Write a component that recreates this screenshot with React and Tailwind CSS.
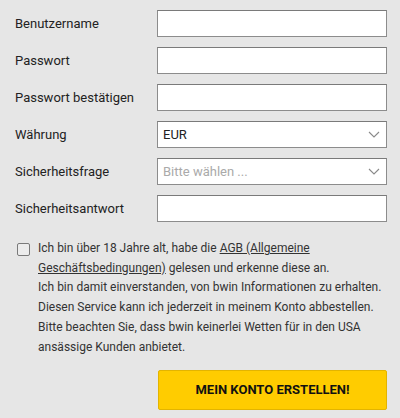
import React from "react";

function Chevron() {
  return (
    <svg width="12" height="7" viewBox="0 0 12 7" className="shrink-0">
      <path d="M1 1l5 5 5-5" fill="none" stroke="#8a8a8a" strokeWidth="1.1" />
    </svg>
  );
}

function Row({ label, children }) {
  return (
    <div className="flex items-center h-[27px]">
      <div className="w-[157px] pl-[15px] text-[13px] text-[#222]">{label}</div>
      <div className="w-[230px] h-[27px]">{children}</div>
    </div>
  );
}

const boxCls =
  "w-full h-full bg-white border border-[#8c8c8c] border-t-[#7a7a7a] flex items-center px-[5px] text-[13px]";

export default function App() {
  return (
    <div
      className="w-[400px] h-[418px] bg-[#e6e6e6] pt-[10px]"
      style={{ fontFamily: "Roboto, 'Liberation Sans', sans-serif" }}
    >
      <div className="flex flex-col gap-[10px]">
        <Row label="Benutzername">
          <div className={boxCls}></div>
        </Row>
        <Row label="Passwort">
          <div className={boxCls}></div>
        </Row>
        <Row label="Passwort bestätigen">
          <div className={boxCls}></div>
        </Row>
        <Row label="Währung">
          <div className={boxCls + " justify-between pr-[6px]"}>
            <span className="text-[#222]">EUR</span>
            <Chevron />
          </div>
        </Row>
        <Row label="Sicherheitsfrage">
          <div className={boxCls + " justify-between pr-[6px]"}>
            <span className="text-[#aaa]">Bitte wählen ...</span>
            <Chevron />
          </div>
        </Row>
        <Row label="Sicherheitsantwort">
          <div className={boxCls}></div>
        </Row>
      </div>

      <div className="flex mt-[17px] pl-[17px] pr-[4px]">
        <div className="w-[13px] h-[13px] border border-[#7a7a7a] rounded-[2px] bg-[#ececec] mt-[4px] shrink-0"></div>
        <p className="ml-[8px] text-[12px] leading-[19.7px] text-[#333] whitespace-nowrap">
          Ich bin über 18 Jahre alt, habe die{" "}
          <span className="underline">AGB (Allgemeine</span>
          <br />
          <span className="underline">Geschäftsbedingungen)</span> gelesen und
          erkenne diese an.
          <br />
          Ich bin damit einverstanden, von bwin Informationen zu erhalten.
          <br />
          Diesen Service kann ich jederzeit in meinem Konto abbestellen.
          <br />
          Bitte beachten Sie, dass bwin keinerlei Wetten für in den USA
          <br />
          ansässige Kunden anbietet.
        </p>
      </div>

      <div className="flex justify-end pr-[13px] mt-[13px]">
        <button className="w-[229px] h-[40px] bg-[#ffcc00] border border-[#e3b400] rounded-[2px] text-[13px] font-bold text-[#111]">
          MEIN KONTO ERSTELLEN!
        </button>
      </div>
    </div>
  );
}
